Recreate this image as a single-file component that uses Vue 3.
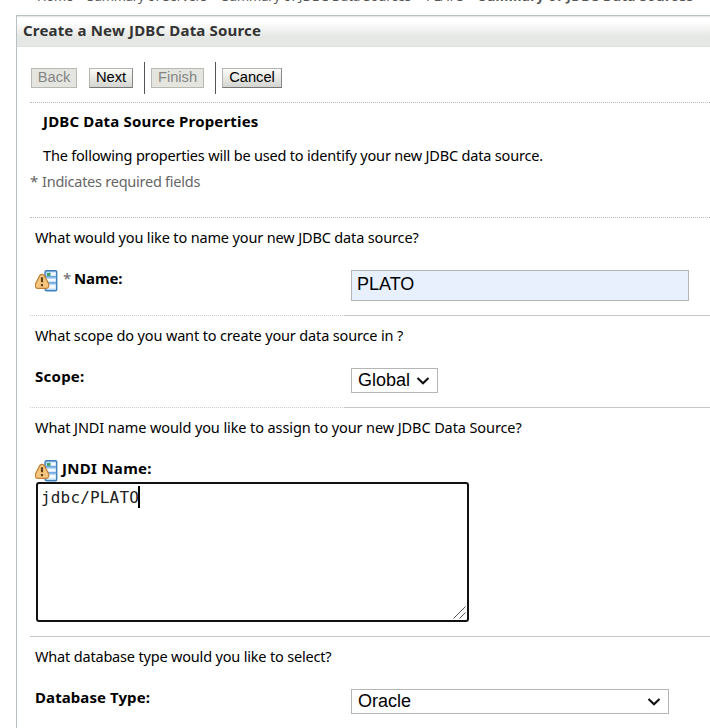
<script setup>
import { h } from 'vue'

const FieldIcon = () =>
  h('svg', { width: 23, height: 22, viewBox: '0 0 23 22' }, [
    h('path', { d: 'M11.5 .8H20.5Q21.7 .8 21.7 2V19.5Q21.7 20.8 20.5 20.8H12Q10 20.8 10 18V3Q10 .8 11.5 .8Z', fill: '#b9dbf8', stroke: '#3f7fba', 'stroke-width': 1.4 }),
    h('path', { d: 'M16 2.5h4.5v3H16zM12 9h8.5v2.5H12zM13 15h7.5v3.5H13z', fill: '#f4faff' }),
    h('path', { d: 'M11 6.8h10.5M11 12.8h10.5', stroke: '#5b9ad6', 'stroke-width': 1.2 }),
    h('path', { d: 'M12 3h3.4v3H12z', fill: '#45a565' }),
    h('path', { d: 'M4.8 5.4Q7 3.2 9.2 5.4L13.6 13.8Q14.4 18 11.5 18.3H2.5Q-.4 18 .6 13.8Z', fill: '#f8c67f', stroke: '#c08136', 'stroke-width': 1.2 }),
    h('path', { d: 'M7 7.3v5M7 14v2.2', stroke: '#604219', 'stroke-width': 2.2 }),
  ])

const Chevron = () =>
  h('svg', { width: 14, height: 8, viewBox: '0 0 14 8' }, [
    h('path', { d: 'M1.5 1L7 6.2L12.5 1', fill: 'none', stroke: '#111', 'stroke-width': 2.1 }),
  ])
</script>

<template>
  <div class="page">
    <nav class="crumbs">
      <span class="c1">Home</span><i>&gt;</i>
      <span class="c2">Summary of Servers</span><i>&gt;</i>
      <span class="c3">Summary of JDBC Data Sources</span><i>&gt;</i>
      <span class="c4">PLATO</span><i>&gt;</i>
      <b class="c5">Summary of JDBC Data Sources</b>
    </nav>
    <main class="panel">
      <h1><span class="t-title">Create a New JDBC Data Source</span></h1>
      <div class="toolbar">
        <button class="back" disabled>Back</button>
        <button class="next">Next</button>
        <i class="bar"></i>
        <button class="finish" disabled>Finish</button>
        <i class="bar"></i>
        <button class="cancel">Cancel</button>
      </div>
      <section class="intro">
        <h2><span class="t-head">JDBC Data Source Properties</span></h2>
        <p><span class="t-intro">The following properties will be used to identify your new JDBC data source.</span></p>
        <p class="req"><span class="star">*</span><span class="t-req">Indicates required fields</span></p>
      </section>
      <section class="row name">
        <p><span class="t-q1">What would you like to name your new JDBC data source?</span></p>
        <div class="field">
          <label><FieldIcon /><span class="star">*</span><b class="t-name">Name:</b></label>
          <div class="input">PLATO</div>
        </div>
      </section>
      <section class="row split scope">
        <p><span class="t-q2">What scope do you want to create your data source in ?</span></p>
        <div class="field">
          <label><b class="t-scope">Scope:</b></label>
          <div class="select small"><span>Global</span><Chevron /></div>
        </div>
      </section>
      <section class="row split jndi">
        <p><span class="t-q3">What JNDI name would you like to assign to your new JDBC Data Source?</span></p>
        <label class="above"><FieldIcon /><b class="t-jndi">JNDI Name:</b></label>
        <div class="area"><span>jdbc/PLATO</span><i class="caret"></i>
          <svg class="grip" width="13" height="13" viewBox="0 0 13 13"><path d="M.5 12.5l12-12M6.5 12.5l6-6" stroke="#555" fill="none" /></svg>
        </div>
      </section>
      <section class="row full db">
        <p><span class="t-q4">What database type would you like to select?</span></p>
        <div class="field">
          <label><b class="t-db">Database Type:</b></label>
          <div class="select wide"><span>Oracle</span><Chevron /></div>
        </div>
      </section>
    </main>
  </div>
</template>

<style>
body { background: #fff; overflow: hidden; }
</style>
<style scoped>
.page { width: 710px; height: 728px; overflow: hidden; font: 14.5px/20px "Noto Sans", sans-serif; color: #000; white-space: nowrap; }
.page * { box-sizing: border-box; }
h1, h2, p { margin: 0; font-size: inherit; }
.crumbs { display: flex; height: 15px; color: #555; font-size: 13px; line-height: 18px; padding-left: 37px; }
.crumbs > * { margin-top: -13px; }
.crumbs i { width: 15px; text-align: center; font-style: normal; }
.c1 { width: 35px; letter-spacing: -.3px; }
.c2 { width: 120px; letter-spacing: -.2px; }
.c3 { width: 189px; letter-spacing: -.08px; }
.c4 { width: 38px; letter-spacing: -.1px; }
.c5 { letter-spacing: .5px; }
.panel { margin-left: 16px; height: 713px; border-left: 1px solid #b8c0c4; border-top: 1px solid #b8c2be; }
h1 { height: 31px; padding: 4px 0 0 6px; color: #333; background: linear-gradient(#dfe1e0 0, #fff 2px, #fff 6px, #e5e7e4 21px, #e6e8e5 29px); border-bottom: 1px solid #dcdfdb; }
h1 span, h2 span, label b { font-size: 15px; letter-spacing: .17px; }
.toolbar { height: 55px; padding: 15px 0 0 14px; display: flex; align-items: flex-start; }
button { height: 20px; margin: 6px 0 0; padding: 0 0 2px; font: 14.7px/16px "Liberation Sans", sans-serif; color: #000; border: 1px solid #b5b6b2; border-bottom: 1px solid #777; border-right-color: #888; background: linear-gradient(#fbfbf9, #d4d5d0); }
button:disabled { color: #858585; background: #e4e5df; border-color: #b7b9b2; }
.back { width: 46px; }
.next { width: 44px; margin-left: 12px; }
.finish { width: 53px; }
.cancel { width: 60px; }
.bar { width: 1px; height: 32px; background: #555; margin: 0 6px 0 11px; }
.intro { margin-left: 13px; height: 115px; border-top: 1px dotted #bbb; padding: 8px 0 0 13px; }
.intro h2 { height: 34px; }
.intro p { height: 26px; }
.t-intro { letter-spacing: -.185px; }
.t-req { letter-spacing: -.25px; }
.t-q1, .t-q2 { letter-spacing: -.145px; }
.t-q3 { letter-spacing: -.1px; }
.t-q4 { letter-spacing: -.18px; }
label .t-name { letter-spacing: -.1px; }
label .t-scope { letter-spacing: .25px; }
label .t-jndi { letter-spacing: .3px; }
label .t-db { letter-spacing: .08px; }
.req { color: #666; display: flex; margin-left: -13px; }
.star { width: 12px; color: #666; font-size: 15px; }
.row { margin-left: 13px; padding: 9px 0 0 5px; border-top: 1px dotted #bbb; }
.name { height: 98px; }
.scope { height: 92px; }
.jndi { height: 229px; }
.split { border-top: 0; background: linear-gradient(90deg, #ccc 50%, transparent 50%) 0 0 / 2px 1px repeat-x; padding-top: 10px; position: relative; }
.split::before { content: ""; position: absolute; top: 0; left: 315px; right: 0; height: 1px; background: #c8c8c8; }
.full { border-top: 1px solid #c8c8c8; }
.row p { height: 20px; }
.field { display: grid; grid-template-columns: 316px 1fr; }
.field label { display: flex; margin-top: 21px; }
.field label svg { margin: 2px 5px 0 0; }
.name .star { width: 11px; }
.input { width: 338px; height: 31px; margin-top: 23px; border: 1px solid #b5b6b2; background: #e8f0fe; padding-left: 5px; font: 18px/26px "Liberation Sans", sans-serif; }
.select { display: flex; justify-content: space-between; align-items: center; height: 25px; border: 1px solid #b5b6b2; padding: 0 7px 0 6px; font: 18px/23px "Liberation Sans", sans-serif; margin-top: 23px; }
.small { width: 87px; }
.wide { width: 318px; }
.above { display: flex; margin-top: 21px; height: 24px; gap: 4px; }
.above svg { margin-top: 2px; }
.area { position: relative; width: 433px; height: 140px; margin: 0 0 0 1px; border: 2px solid #111; border-radius: 3px; padding: 2px 3px; font: 16px/24px "DejaVu Sans Mono", monospace; letter-spacing: .17px; display: flex; color: #222; }
.caret { width: 2px; height: 22px; background: #000; margin-left: -1px; }
.grip { position: absolute; right: 1px; bottom: 1px; }
</style>
